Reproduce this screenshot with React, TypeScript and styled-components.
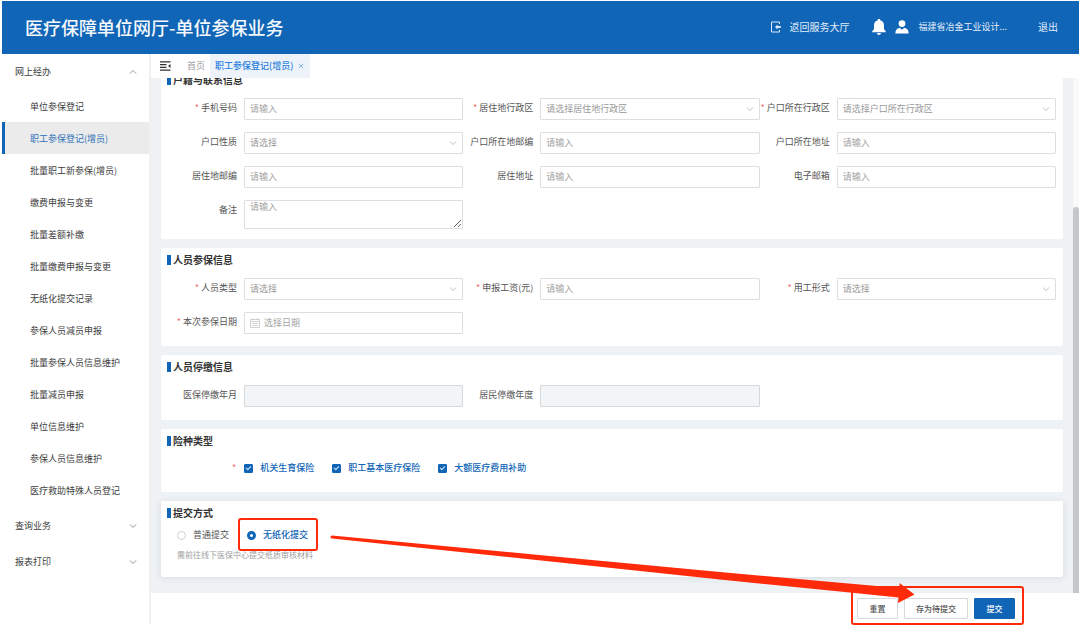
import React from 'react';
import styled, { createGlobalStyle, css } from 'styled-components';

const BLUE = '#1065b6';
const RED = '#ff2a0a';

const GlobalStyle = createGlobalStyle`
  *, *::before, *::after { box-sizing: border-box; }
  body {
    margin: 0;
    background: #fff;
    color: #555;
    font: 9px/12px "Noto Sans CJK SC", "Noto Sans", sans-serif;
  }
  button, input, select, textarea { font: inherit; color: inherit; margin: 0; }
  a { color: inherit; text-decoration: none; }
`;

const Page = styled.div`
  position: relative;
  display: flex;
  flex-direction: column;
  height: 100vh;
  padding: 1px 1px 5px 2px;
  overflow: hidden;
`;

const Header = styled.header`
  display: flex;
  align-items: center;
  flex: none;
  height: 53px;
  padding: 0 21px 2px 23px;
  background: ${BLUE};
  color: #e4eefa;
`;

const AppTitle = styled.h1`
  margin: 0 auto 0 0;
  font-size: 18px;
  line-height: 24px;
  font-weight: 500;
  color: #f4f8fd;
`;

const HallLink = styled.a`
  display: flex;
  align-items: center;
  gap: 8px;
  margin-right: 23px;
  font-size: 10px;
`;

const UserBox = styled.div`
  display: flex;
  align-items: center;
  gap: 9px;
  margin-right: 31px;
`;

const TextButton = styled.button`
  padding: 0;
  border: 0;
  background: none;
  font-size: 10px;
`;

const IconButton = styled.button`
  display: flex;
  padding: 0;
  border: 0;
  background: none;
`;

const Body = styled.div`
  display: grid;
  grid-template-columns: 149px minmax(0, 1fr);
  flex: 1;
  min-height: 0;
`;

const Sidebar = styled.nav`
  border-right: 2px solid #f0f1f3;
  color: #3c3c3c;
`;

const GroupButton = styled.button`
  display: flex;
  align-items: center;
  justify-content: space-between;
  width: 100%;
  height: 36px;
  padding: 0 12px 0 13px;
  border: 0;
  background: none;
`;

const MenuList = styled.ul`
  margin: 0 0 2px;
  padding: 0;
  list-style: none;
`;

const MenuLink = styled.a<{ $active?: boolean }>`
  display: flex;
  align-items: center;
  height: 32px;
  padding: 2px 0 0 28px;
  ${(p) => p.$active && css`
    padding-left: 25px;
    border-left: 3px solid ${BLUE};
    background: #ebebeb;
    color: #2f73b8;
  `}
`;

const Main = styled.main`
  display: flex;
  flex-direction: column;
  min-height: 0;
`;

const TabBar = styled.div`
  display: flex;
  align-items: center;
  flex: none;
  height: 24px;
  padding-left: 9px;
`;

const Tab = styled.a<{ $active?: boolean }>`
  display: flex;
  align-items: center;
  gap: 5px;
  height: 24px;
  padding: 0 6px 0 5px;
  color: #999;
  ${(p) => p.$active && css`
    background: #edf3f9;
    color: #2b7fdc;
    font-weight: 500;
  `}
`;

const HomeTab = styled(Tab)`
  margin-left: 11px;
  padding-right: 5px;
`;

const ScrollArea = styled.div`
  display: flex;
  flex: 1;
  min-height: 0;
  background: #eef2f5;
`;

const Cards = styled.form`
  display: flex;
  flex: 1;
  flex-direction: column;
  justify-content: flex-end;
  gap: 9px;
  min-width: 0;
  padding: 0 10px 16px;
  overflow: hidden;
`;

const ScrollTrack = styled.div`
  display: flex;
  flex: none;
  flex-direction: column;
  justify-content: flex-end;
  width: 6px;
  background: #fafafa;
`;

const ScrollThumb = styled.div`
  height: 75%;
  border-radius: 4px 4px 0 0;
  background: #c6c7cb;
`;

const Card = styled.section<{ $bottom: number; $raised?: boolean }>`
  flex: none;
  padding: 7px 7px ${(p) => p.$bottom}px 6px;
  border-radius: 2px;
  background: #fff;
  ${(p) => p.$raised && css`box-shadow: 0 1px 7px rgba(60, 70, 100, 0.12);`}
`;

const CardTitle = styled.h2`
  display: flex;
  align-items: center;
  gap: 2px;
  height: 10px;
  margin: 0;
  font-size: 10px;
  font-weight: 700;
  color: #333;

  &::before {
    content: '';
    width: 4px;
    height: 10px;
    background: ${BLUE};
  }
`;

const FieldGrid = styled.div`
  display: grid;
  grid-template-columns: repeat(3, minmax(0, 1fr));
  row-gap: 12px;
  margin-top: 13px;
`;

const Field = styled.div`
  display: flex;
`;

const Label = styled.label<{ $required?: boolean }>`
  display: flex;
  justify-content: flex-end;
  flex: none;
  width: 77px;
  height: 20px;
  padding-right: 7px;
  line-height: 20px;
  white-space: nowrap;
  ${(p) => p.$required && css`
    &::before {
      content: '*';
      margin-right: 2px;
      color: #f56c6c;
    }
  `}
`;

const controlStyle = css`
  display: block;
  width: 100%;
  height: 22px;
  padding: 0 5px;
  border: 1px solid #dcdee2;
  border-radius: 1px;
  background: #fff;
  color: #999;
  outline: 0;
  &::placeholder { color: #a3a3a3; opacity: 1; }
  &:disabled { background: #f2f5f8; border-color: #d8d8d8; }
`;

const ControlBox = styled.div`
  position: relative;
  flex: 1;
  min-width: 0;
`;

const Input = styled.input<{ $icon?: boolean }>`
  ${controlStyle}
  padding-bottom: 2px;
  ${(p) => p.$icon && css`padding-left: 19px;`}
`;

const Select = styled.select`
  ${controlStyle}
  appearance: none;
`;

const TextArea = styled.textarea`
  ${controlStyle}
  height: 29px;
  resize: vertical;
`;

const ControlIcon = styled.span<{ $side: 'left' | 'right' }>`
  position: absolute;
  top: 0;
  bottom: 0;
  ${(p) => p.$side}: 6px;
  display: flex;
  align-items: center;
  pointer-events: none;
`;

const CheckRow = styled.div`
  display: flex;
  align-items: center;
  gap: 18px;
  height: 18px;
  margin-top: 13px;
  padding-left: 65px;
  color: ${BLUE};
  font-weight: 500;
`;

const RequiredMark = styled.span`
  margin-right: -10px;
  color: #f56c6c;
  font-weight: 400;
`;

const RadioRow = styled.div`
  display: flex;
  align-items: center;
  gap: 18px;
  height: 24px;
  margin-top: 5px;
  padding-left: 10px;
`;

const Choice = styled.label<{ $on?: boolean }>`
  position: relative;
  display: flex;
  align-items: center;
  gap: 7px;
  ${(p) => p.$on && css`color: ${BLUE}; font-weight: 500;`}
`;

const Tick = styled.input`
  appearance: none;
  width: 9px;
  height: 9px;
  border: 1px solid ${BLUE};
  border-radius: 1px;
  background: ${BLUE};

  &:checked::before {
    content: '';
    display: block;
    width: 5px;
    height: 3px;
    margin: 1px;
    border: solid #d8e8f8;
    border-width: 0 0 1px 1px;
    transform: rotate(-45deg);
  }
`;

const Radio = styled.input`
  appearance: none;
  width: 9px;
  height: 9px;
  border: 1px solid #cfcfcf;
  border-radius: 50%;
  background: #fff;

  &:checked { border: 3px solid ${BLUE}; }
`;

const Hint = styled.p`
  margin: 2px 0 0;
  padding-left: 10px;
  font-size: 8px;
  line-height: 12px;
  color: #a0a0a0;
`;

const Footer = styled.footer`
  display: flex;
  align-items: center;
  justify-content: flex-end;
  flex: none;
  height: 31px;
  padding-right: 64px;
`;

const Actions = styled.div`
  position: relative;
  display: flex;
  gap: 6px;
`;

const ActionButton = styled.button<{ $primary?: boolean }>`
  min-width: 41px;
  height: 21px;
  padding: 0 11px;
  border: 1px solid #d6d8dc;
  border-radius: 1px;
  background: #fff;
  color: #555;
  font-size: 8px;
  font-weight: 500;
  ${(p) => p.$primary && css`
    border-color: ${BLUE};
    background: ${BLUE};
    color: #fff;
  `}
`;

const Highlight = styled.span<{ $inset: string }>`
  position: absolute;
  inset: ${(p) => p.$inset};
  border: 2px solid ${RED};
  border-radius: 3px;
  pointer-events: none;
`;

const ArrowLayer = styled.svg`
  position: absolute;
  left: 330px;
  top: 530px;
  pointer-events: none;
`;

const Chevron = ({ up, color = '#888' }: { up?: boolean; color?: string }) => (
  <svg width="8" height="8" viewBox="0 0 8 8" fill="none" stroke={color} strokeWidth="0.9">
    <path d={up ? 'M1 5.5 4 2.5l3 3' : 'M1 2.5l3 3 3-3'} />
  </svg>
);

const CalendarIcon = () => (
  <svg width="10" height="10" viewBox="0 0 10 10" fill="none" stroke="#c4c4c4" strokeWidth="0.8">
    <path d="M.5 1.5h9v8h-9zM.5 3.7h9M2.7.3v2M7.3.3v2M2.3 5.5h5.4M2.3 7.5h5.4" />
  </svg>
);

const HallIcon = () => (
  <svg width="10" height="12" viewBox="0 0 10 12" fill="none" stroke="#dceafa" strokeWidth="1">
    <path d="M8.5 3V1H.5v10h8V9" />
    <path d="M9.8 5H6.500V3.600L4 6l2.500 2.400V7h3.300z" fill="#dceafa" stroke="none" />
  </svg>
);

const BellIcon = () => (
  <svg width="14" height="16" viewBox="0 0 14 16" fill="#fff">
    <path d="M7 0c.8 0 1.3.5 1.3 1.3C10.600 1.900 12 3.800 12 6.200V10l1.700 2.200c.4.5.1 1.100-.5 1.100H.8c-.6 0-.9-.6-.5-1.100L2 10V6.200c0-2.400 1.400-4.300 3.700-4.900C5.700.5 6.200 0 7 0zM5 14h4c-.2 1.200-1 1.900-2 1.900S5.200 15.200 5 14z" />
  </svg>
);

const UserIcon = () => (
  <svg width="14" height="14" viewBox="0 0 14 14" fill="#fff">
    <circle cx="7" cy="3.600" r="3.400" />
    <path d="M.3 13.400C.3 10.200 2 8.300 4.700 7.800L7 9.800l2.300-2c2.700.5 4.400 2.400 4.400 5.600z" />
  </svg>
);

const FoldIcon = () => (
  <svg width="11" height="10" viewBox="0 0 11 10" stroke="#333" strokeWidth="1.200" fill="none">
    <path d="M0 .8h10.500M0 3.600h6.500M0 6.400h6.500M0 9.200h10.500" />
    <path d="M10.500 3v4L8 5z" fill="#333" stroke="none" />
  </svg>
);

const CloseIcon = () => (
  <svg width="6" height="6" viewBox="0 0 6 6" stroke="#6ba4e0" strokeWidth="0.8">
    <path d="M.8.8l4.400 4.400M5.200.8L.8 5.200" />
  </svg>
);

type FieldSpec = {
  id: string;
  label: string;
  kind?: 'input' | 'select' | 'date' | 'textarea' | 'disabled';
  hint?: string;
  required?: boolean;
};

const FormField = ({ id, label, kind = 'input', hint = '请输入', required }: FieldSpec) => (
  <Field>
    <Label htmlFor={id} $required={required}>{label}</Label>
    <ControlBox>
      {kind === 'select' && (
        <>
          <Select id={id}><option>{hint}</option></Select>
          <ControlIcon $side="right"><Chevron color="#b8b8b8" /></ControlIcon>
        </>
      )}
      {kind === 'date' && (
        <>
          <Input id={id} placeholder={hint} $icon />
          <ControlIcon $side="left"><CalendarIcon /></ControlIcon>
        </>
      )}
      {kind === 'textarea' && <TextArea id={id} placeholder={hint} />}
      {kind === 'input' && <Input id={id} placeholder={hint} />}
      {kind === 'disabled' && <Input id={id} disabled />}
    </ControlBox>
  </Field>
);

const contactFields: FieldSpec[] = [
  { id: 'phone', label: '手机号码', required: true },
  { id: 'live-area', label: '居住地行政区', kind: 'select', hint: '请选择居住地行政区', required: true },
  { id: 'home-area', label: '户口所在行政区', kind: 'select', hint: '请选择户口所在行政区', required: true },
  { id: 'home-kind', label: '户口性质', kind: 'select', hint: '请选择' },
  { id: 'home-zip', label: '户口所在地邮编' },
  { id: 'home-address', label: '户口所在地址' },
  { id: 'live-zip', label: '居住地邮编' },
  { id: 'live-address', label: '居住地址' },
  { id: 'email', label: '电子邮箱' },
  { id: 'note', label: '备注', kind: 'textarea' },
];

const insuredFields: FieldSpec[] = [
  { id: 'person-kind', label: '人员类型', kind: 'select', hint: '请选择', required: true },
  { id: 'wage', label: '申报工资(元)', required: true },
  { id: 'work-kind', label: '用工形式', kind: 'select', hint: '请选择', required: true },
  { id: 'start-date', label: '本次参保日期', kind: 'date', hint: '选择日期', required: true },
];

const stopFields: FieldSpec[] = [
  { id: 'stop-month', label: '医保停缴年月', kind: 'disabled' },
  { id: 'stop-year', label: '居民停缴年度', kind: 'disabled' },
];

const menu = [
  '单位参保登记', '职工参保登记(增员)', '批量职工新参保(增员)', '缴费申报与变更', '批量差额补缴',
  '批量缴费申报与变更', '无纸化提交记录', '参保人员减员申报', '批量参保人员信息维护', '批量减员申报',
  '单位信息维护', '参保人员信息维护', '医疗救助特殊人员登记',
];

const insurances = ['机关生育保险', '职工基本医疗保险', '大额医疗费用补助'];

export default function App() {
  return (
    <Page>
      <GlobalStyle />
      <Header>
        <AppTitle>医疗保障单位网厅-单位参保业务</AppTitle>
        <HallLink href="#hall"><HallIcon />返回服务大厅</HallLink>
        <UserBox>
          <IconButton type="button" aria-label="通知"><BellIcon /></IconButton>
          <UserIcon />
          <span>福建省冶金工业设计...</span>
        </UserBox>
        <TextButton type="button">退出</TextButton>
      </Header>
      <Body>
        <Sidebar>
          <GroupButton type="button">网上经办<Chevron up /></GroupButton>
          <MenuList>
            {menu.map((item, i) => (
              <li key={item}><MenuLink href="#menu" $active={i === 1}>{item}</MenuLink></li>
            ))}
          </MenuList>
          <GroupButton type="button">查询业务<Chevron /></GroupButton>
          <GroupButton type="button">报表打印<Chevron /></GroupButton>
        </Sidebar>
        <Main>
          <TabBar>
            <IconButton type="button" aria-label="收起菜单"><FoldIcon /></IconButton>
            <HomeTab href="#home">首页</HomeTab>
            <Tab href="#register" $active>职工参保登记(增员)<CloseIcon /></Tab>
          </TabBar>
          <ScrollArea>
            <Cards id="register-form">
              <Card $bottom={10}>
                <CardTitle>户籍与联系信息</CardTitle>
                <FieldGrid>{contactFields.map((f) => <FormField key={f.id} {...f} />)}</FieldGrid>
              </Card>
              <Card $bottom={12}>
                <CardTitle>人员参保信息</CardTitle>
                <FieldGrid>{insuredFields.map((f) => <FormField key={f.id} {...f} />)}</FieldGrid>
              </Card>
              <Card $bottom={13}>
                <CardTitle>人员停缴信息</CardTitle>
                <FieldGrid>{stopFields.map((f) => <FormField key={f.id} {...f} />)}</FieldGrid>
              </Card>
              <Card $bottom={15}>
                <CardTitle>险种类型</CardTitle>
                <CheckRow>
                  <RequiredMark>*</RequiredMark>
                  {insurances.map((name) => (
                    <Choice key={name} $on><Tick type="checkbox" defaultChecked />{name}</Choice>
                  ))}
                </CheckRow>
              </Card>
              <Card $bottom={16} $raised>
                <CardTitle>提交方式</CardTitle>
                <RadioRow>
                  <Choice><Radio type="radio" name="mode" />普通提交</Choice>
                  <Choice $on>
                    <Radio type="radio" name="mode" defaultChecked />无纸化提交
                    <Highlight $inset="-11px -10px -10px -9px" />
                  </Choice>
                </RadioRow>
                <Hint>需前往线下医保中心提交纸质审核材料</Hint>
              </Card>
            </Cards>
            <ScrollTrack><ScrollThumb /></ScrollTrack>
          </ScrollArea>
          <Footer>
            <Actions>
              <ActionButton type="reset" form="register-form">重置</ActionButton>
              <ActionButton type="button">存为待提交</ActionButton>
              <ActionButton type="button" $primary>提交</ActionButton>
              <Highlight $inset="-12px -9px -6px -6px" />
            </Actions>
          </Footer>
        </Main>
      </Body>
      <ArrowLayer width="590" height="80" viewBox="330 530 590 80" fill={RED} aria-hidden="true">
        <path d="M332 535.500 560 557 720 572 840 582.700 899.500 588V583l15 11.500-16.500 8.500.5-5.500L840 591.500 720 579.500 560 562.500 332 538.500a1.500 1.500 0 0 1 0-3z" />
      </ArrowLayer>
    </Page>
  );
}
